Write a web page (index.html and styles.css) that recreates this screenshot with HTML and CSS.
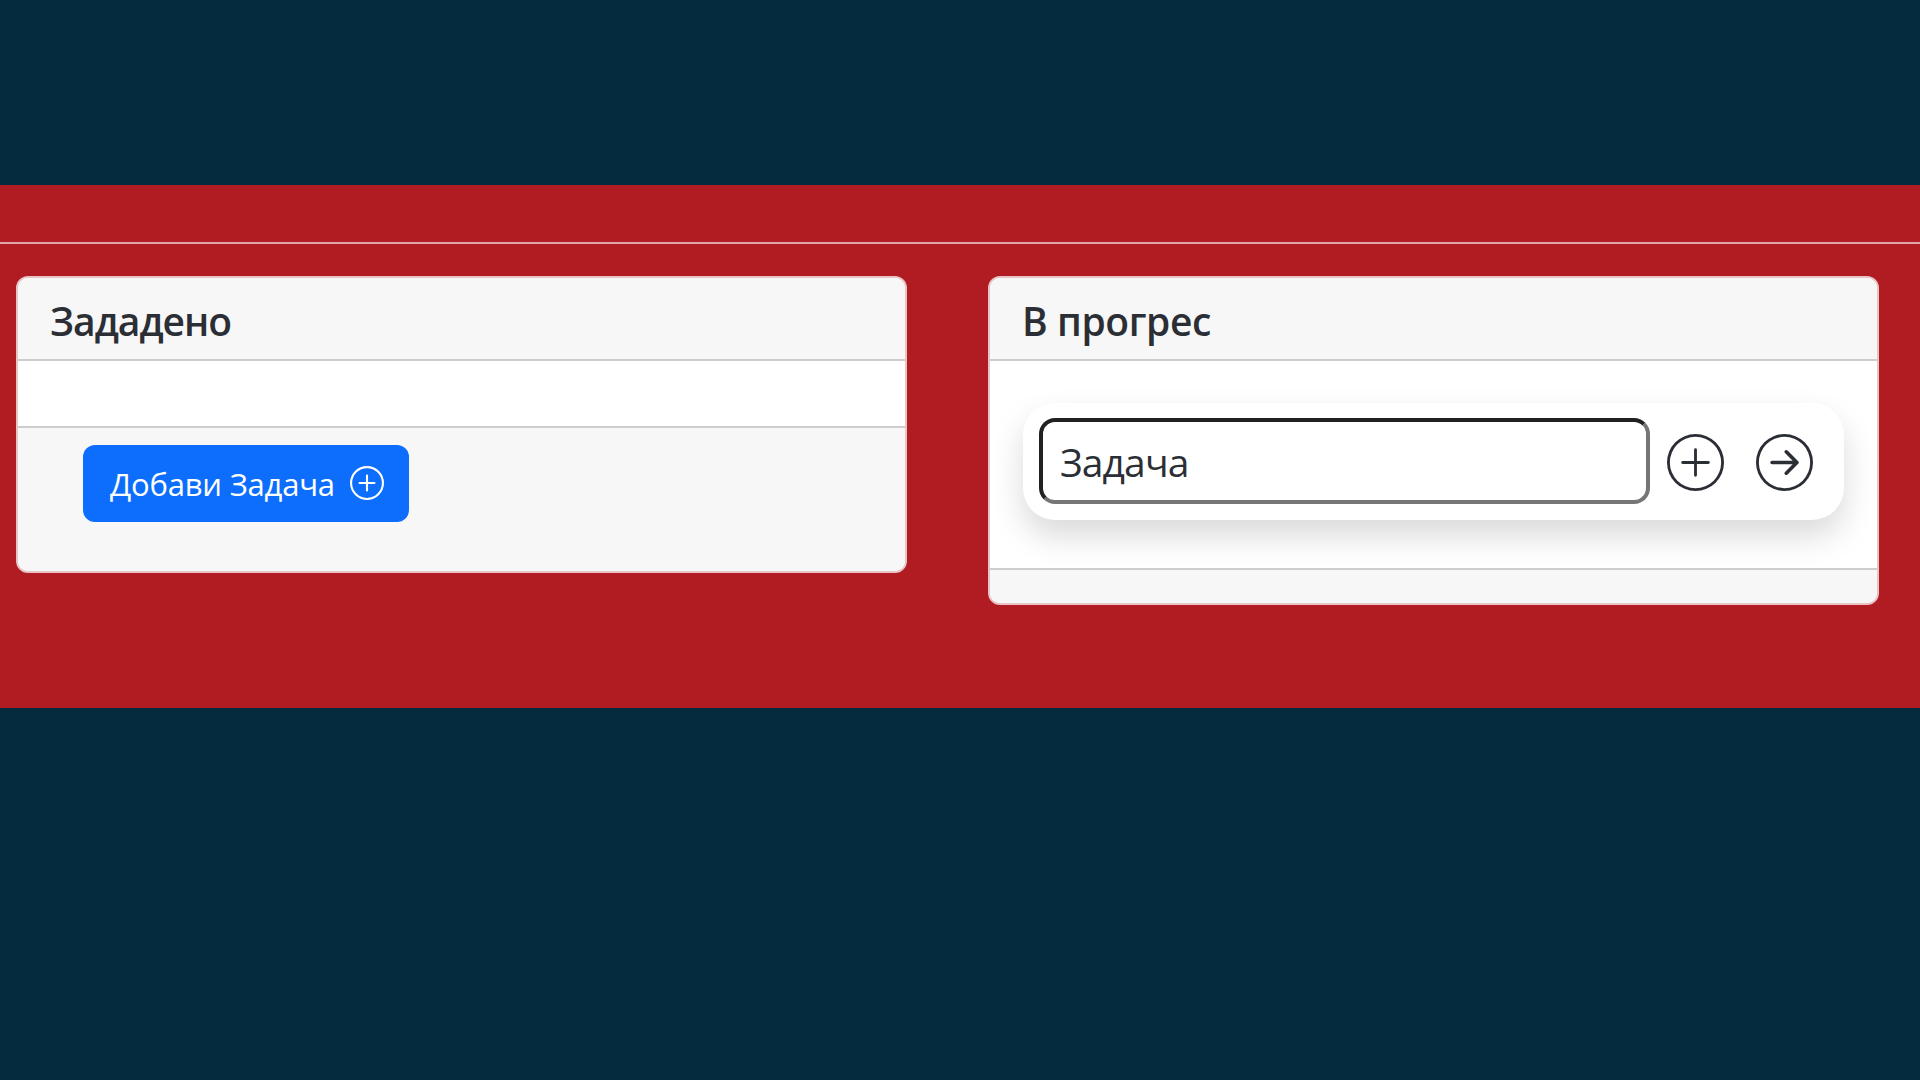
FILE: index.html
```html
<!DOCTYPE html>
<html lang="bg">
<head>
<meta charset="utf-8">
<title>Задачи</title>
<link rel="stylesheet" href="styles.css">
</head>
<body>
<main class="board">
  <hr class="divider">
  <div class="columns">
    <section class="card">
      <header class="card-header"><h5 class="card-title title-todo">Зададено</h5></header>
      <div class="card-body"></div>
      <footer class="card-footer footer-action">
        <button class="btn" type="button"><span class="btn-label">Добави Задача</span>
          <svg class="btn-icon" viewBox="0 0 16 16" fill="currentColor"><path d="M8 15A7 7 0 1 1 8 1a7 7 0 0 1 0 14m0 1A8 8 0 1 0 8 0a8 8 0 0 0 0 16"/><path d="M8 4a.5.5 0 0 1 .5.5v3h3a.5.5 0 0 1 0 1h-3v3a.5.5 0 0 1-1 0v-3h-3a.5.5 0 0 1 0-1h3v-3A.5.5 0 0 1 8 4"/></svg>
        </button>
      </footer>
    </section>
    <section class="card">
      <header class="card-header"><h5 class="card-title title-progress">В прогрес</h5></header>
      <div class="card-body body-tasks">
        <div class="task">
          <div class="task-input"><span class="task-text">Задача</span></div>
          <svg class="task-icon" viewBox="0 0 16 16" fill="currentColor"><path d="M8 15.200A7.200 7.200 0 1 1 8 .8a7.200 7.200 0 0 1 0 14.400m0 .8A8 8 0 1 0 8 0a8 8 0 0 0 0 16"/><path d="M8 4a.4.4 0 0 1 .4.4v3.200h3.200a.4.4 0 0 1 0 .8H8.400v3.200a.4.4 0 0 1-.8 0V8.400H4.400a.4.4 0 0 1 0-.8h3.200V4.400A.4.4 0 0 1 8 4"/></svg>
          <svg class="task-icon" viewBox="0 0 16 16" fill="currentColor"><path d="M8 15.200A7.200 7.200 0 1 1 8 .8a7.200 7.200 0 0 1 0 14.400m0 .8A8 8 0 1 0 8 0a8 8 0 0 0 0 16"/><path d="M4.500 7.500a.5.5 0 0 0 0 1h5.793l-2.147 2.146a.5.5 0 0 0 .708.708l3-3a.5.5 0 0 0 0-.708l-3-3a.5.5 0 1 0-.708.708L10.293 7.500z"/></svg>
        </div>
      </div>
      <footer class="card-footer footer-empty"></footer>
    </section>
  </div>
</main>
</body>
</html>
```
FILE: styles.css
```css
* { box-sizing: border-box; }
body {
  margin: 0;
  height: 1080px;
  padding-top: 185px;
  overflow: hidden;
  background: #052b3e;
  color: #2b2f35;
  font-family: "Open Sans", "Noto Sans", sans-serif;
}
.board {
  height: 523px;
  padding-top: 57px;
  background: #b01c21;
}
.divider {
  height: 2px;
  margin: 0 0 32px;
  border: 0;
  background: #e3a5aa;
}
.columns {
  display: grid;
  grid-template-columns: 891px 891px;
  column-gap: 81px;
  align-items: start;
  padding-left: 16px;
}
.card {
  overflow: hidden;
  border: 2px solid #e8c4c6;
  border-radius: 12px;
  background: #fff;
}
.card-header {
  display: flex;
  align-items: center;
  height: 83px;
  padding: 5px 32px 0;
  border-bottom: 2px solid #cdcdcd;
  background: #f7f7f7;
}
.card-title {
  margin: 0;
  font-size: 39px;
  font-weight: 600;
  line-height: 48px;
  white-space: nowrap;
}
.title-todo { letter-spacing: -1px; }
.title-progress { letter-spacing: -0.4px; }
.card-body { height: 65px; }
.card-footer {
  border-top: 2px solid #cdcdcd;
  background: #f7f7f7;
}
.footer-action {
  height: 145px;
  padding: 17px 65px;
}
.btn {
  display: flex;
  align-items: center;
  justify-content: space-between;
  width: 326px;
  height: 77px;
  padding: 0 25px 0 27px;
  border: 0;
  border-radius: 12px;
  background: #0d6efd;
  color: #fff;
  font: 400 31px/40px "Open Sans", "Noto Sans", sans-serif;
  letter-spacing: -0.2px;
}
.btn-label { white-space: nowrap; }
.btn-icon {
  width: 34px;
  height: 34px;
  margin-bottom: 1px;
}
.body-tasks {
  height: 207px;
  padding: 42px 33px 0;
}
.task {
  display: flex;
  align-items: center;
  height: 117px;
  padding: 0 32px 1px 16px;
  border-radius: 32px;
  background: #fff;
  box-shadow: 0 16px 32px rgba(0, 0, 0, 0.15);
}
.task-input {
  display: flex;
  align-items: center;
  flex: none;
  width: 611px;
  height: 86px;
  padding: 1px 17px 0;
  border: 4px solid;
  border-color: #212121 #767676 #767676 #212121;
  border-radius: 16px;
  font-size: 39px;
  line-height: 48px;
  letter-spacing: -0.9px;
}
.task-icon {
  flex: none;
  width: 57px;
  height: 57px;
  margin: 2px 0 0 17px;
}
.task-icon + .task-icon { margin-left: 32px; }
.footer-empty { height: 35px; }
```
